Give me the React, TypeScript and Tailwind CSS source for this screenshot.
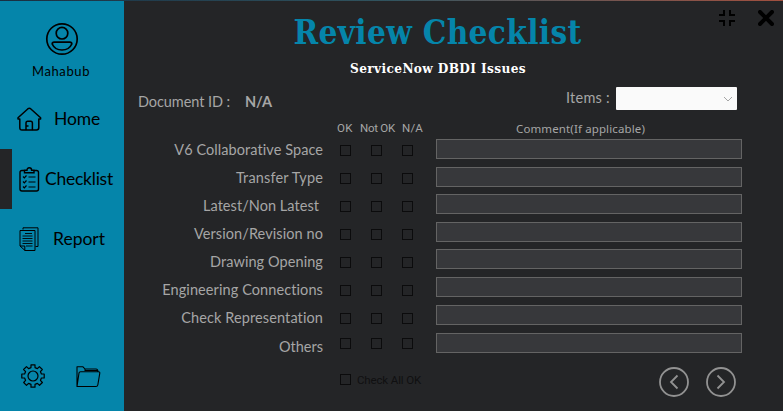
import { useLayoutEffect, useRef, useState } from "react";

type FitProps = { text: string; width: number; className?: string };

// One line of text, tracked so that it fills the given width.
function FitText({ text, width, className = "" }: FitProps) {
  const ref = useRef<HTMLSpanElement>(null);
  const [spacing, setSpacing] = useState(0);
  useLayoutEffect(() => {
    if (!ref.current) return;
    const natural = ref.current.getBoundingClientRect().width - spacing * text.length;
    setSpacing((width - natural) / text.length);
  }, [text, width]);
  return (
    <span ref={ref} className={`inline-block whitespace-pre ${className}`} style={{ letterSpacing: spacing }}>
      {text}
    </span>
  );
}

const rows = [
  { label: "V6 Collaborative Space", width: 149, input: "mb-2" },
  { label: "Transfer Type", width: 87, input: "mb-[7px]" },
  { label: "Latest/Non Latest", width: 116, input: "mb-2", pad: "pr-1" },
  { label: "Version/Revision no", width: 129, input: "mb-[7px]" },
  { label: "Drawing Opening", width: 113, input: "mb-2" },
  { label: "Engineering Connections", width: 161, input: "mb-2" },
  { label: "Check Representation", width: 142, input: "mb-2" },
  { label: "Others", width: 44, input: "", pad: "pt-px" },
];

function Box({ last = false }: { last?: boolean }) {
  return <button className={`block size-[11px] border border-[#0b0b0c] ${last ? "" : "mb-[17px]"}`} />;
}

function CheckColumn() {
  return (
    <div className="w-[31px]">
      {rows.slice(0, 6).map((r) => (
        <Box key={r.label} />
      ))}
      <button className="mb-[14px] block size-[11px] border border-[#0b0b0c]" />
      <Box last />
    </div>
  );
}

function Sidebar() {
  return (
    <aside className="flex w-[124px] shrink-0 flex-col bg-[#0585aa] text-black">
      <div className="flex h-[88px] flex-col items-center pt-[21px]">
        <svg width="34" height="34" viewBox="0 0 34 34" fill="none" stroke="black" strokeWidth="1.7" className="shrink-0">
          <circle cx="17" cy="17" r="15.2" />
          <circle cx="17" cy="11.2" r="5.8" />
          <path d="M7.2 22Q7.2 20.2 9.2 20.2H24.8Q26.8 20.2 26.8 22C25 26 21.5 28 17 28S9 26 7.2 22Z" />
        </svg>
        <FitText text="Mahabub" width={58} className="mr-[2px] mt-[7px] text-[13px] leading-4" />
      </div>
      <div className="flex h-[60px] items-center pl-[17px]">
        <svg width="25" height="25" viewBox="0 0 25 25" fill="none" stroke="black" strokeWidth="1.5" strokeLinejoin="round" strokeLinecap="round">
          <path d="M1 12V10.8L11 1.7Q12.3.8 13.6 1.7L23.6 10.8V12H21.8V20.5Q21.8 23 19.5 23H5Q2.8 23 2.8 20.5V12Z" />
          <path d="M9 22.5V16Q9 14.2 10.7 14.2H13.7Q15.4 14.2 15.4 16V22.5M9.2 19H11" />
        </svg>
        <FitText text="Home" width={46} className="ml-3 text-[17.5px]" />
      </div>
      <div className="flex h-[60px] items-center">
        <div className="h-full w-3 bg-[#242527]" />
        <svg className="ml-[7px]" width="21" height="25" viewBox="0 0 21 25" fill="none" stroke="black" strokeWidth="1.4">
          <path d="M6 3.5H3Q1 3.5 1 5.5V22Q1 24 3 24H17.5Q19.5 24 19.5 22V5.5Q19.5 3.5 17.5 3.5H14.5M5.5 5.8V3.2H8Q8 .8 10.3.8T12.6 3.2H15V5.8Z" />
          <path d="M4 9.5L5.3 10.8L7.5 8.5M4 14.5L5.3 15.8L7.5 13.5M4 19.5L5.3 20.8L7.5 18.5M9.5 10H16.5M9.5 15H16.5M9.5 20H16.5" strokeWidth="1.2" />
        </svg>
        <FitText text="Checklist" width={68} className="ml-[5px] text-[17.5px]" />
      </div>
      <div className="flex h-[60px] items-center pl-[19px]">
        <svg width="21" height="25" viewBox="0 0 21 25" fill="none" stroke="black" strokeWidth="1">
          <path d="M4 2.5V.8H19V19.5H16.5M1 3.5H16V23.5H6L1 19Z" />
          <path d="M1 19H5.8V23.5" />
          <path d="M6 6.5H13M3.5 9H13.5M3.5 11.5H13.5M3.5 14H13.5M3.5 16.5H13.5M7 19H13.5" strokeWidth=".9" />
        </svg>
        <FitText text="Report" width={52} className="ml-[13px] text-[17.5px]" />
      </div>
      <div className="mt-auto flex h-[47px] pl-[21px]">
        <svg width="24" height="24" viewBox="0 0 24 24" fill="none" stroke="black" strokeWidth="1.2" strokeLinejoin="round">
          <path d="M10 .8H14V3.6L16.4 4.6L18.4 2.6L21.3 5.5L19.4 7.6L20.4 10H23.2V14H20.4L19.4 16.4L21.4 18.5L18.5 21.3L16.4 19.4L14 20.4V23.2H10V20.4L7.6 19.4L5.5 21.3L2.7 18.5L4.6 16.4L3.6 14H.8V10H3.6L4.6 7.6L2.6 5.5L5.5 2.6L7.6 4.6L10 3.6Z" />
          <circle cx="12" cy="12" r="5" />
        </svg>
        <svg className="ml-[31px] mt-[2px]" width="25" height="22" viewBox="0 0 25 22" fill="none" stroke="black" strokeWidth="1.1" strokeLinejoin="round">
          <path d="M1 20.5V.8H7L9 3H20Q22 3 22 6M1 20.5L3 7Q3.3 5.8 4.5 5.8H22.5Q24 5.8 23.8 7.2L21.8 19Q21.5 20.5 20 20.5ZM9 3V4.5H21.5" />
        </svg>
      </div>
    </aside>
  );
}

export default function App() {
  return (
    <div className="flex h-[411px] w-[783px] flex-col overflow-hidden bg-[#242527] font-['Lato','Liberation_Sans',sans-serif]">
      <div className="h-px shrink-0 bg-linear-to-r from-[#182f42] via-[#31545f] to-[#a14f3e]" />
      <div className="flex min-h-0 flex-1">
        <Sidebar />
        <main className="min-w-0 flex-1 text-[#a6a6a6]">
          <header className="flex h-[84px] justify-between">
            <div className="ml-[169px] flex w-[289px] flex-col items-center font-['DejaVu_Serif_Condensed','DejaVu_Serif',serif] font-bold">
              <h1 className="h-[55px] pt-[10px] text-[33px] leading-[44px] text-[#0585aa]">
                <FitText text="Review Checklist" width={288} />
              </h1>
              <h2 className="pl-px text-[13.5px] leading-[24px] text-white">
                <FitText text="ServiceNow DBDI Issues" width={176} />
              </h2>
            </div>
            <div className="flex pr-[9px] pt-[9px]">
              <svg width="16" height="16" viewBox="0 0 16 16" fill="none" stroke="black" strokeWidth="2" className="mr-[23px]">
                <path d="M0 5H5V0M11 0V5H16M0 11H5V16M11 16V11H16" />
              </svg>
              <svg width="16" height="16" viewBox="0 0 16 16" stroke="black" strokeWidth="4" strokeLinecap="round">
                <path d="M2 2L14 14M14 2L2 14" />
              </svg>
            </div>
          </header>
          <div className="flex h-[34px] pl-[14px]">
            <div className="w-[107px] pt-[6px] leading-5">
              <FitText text="Document ID :" width={92} className="text-[14.5px]" />
            </div>
            <div className="w-[321px] pt-[6px] leading-5">
              <FitText text="N/A" width={27} className="text-[14.5px] font-bold" />
            </div>
            <div className="w-[50px] pt-[2px] leading-5">
              <FitText text="Items :" width={44} className="text-[14.5px]" />
            </div>
            <button className="mt-[2px] flex h-[23px] w-[121px] items-center justify-end rounded-[1px] bg-[#fafafa] pr-1">
              <svg width="10" height="6" viewBox="0 0 10 6" fill="none" stroke="#a5a5a5">
                <path d="M1 1L5 5L9 1" />
              </svg>
            </button>
          </div>
          <div className="flex h-[20px] font-['Roboto',sans-serif] text-[11.5px]">
            <div className="flex w-[392px] pl-[213px] leading-[18px]">
              <div className="w-[23px]"><FitText text="OK" width={16} /></div>
              <div className="w-[42px]"><FitText text="Not OK" width={35} /></div>
              <FitText text="N/A" width={21} />
            </div>
            <FitText text="Comment(If applicable)" width={129} className="font-['Noto_Sans',sans-serif] text-[11.5px] leading-5" />
          </div>
          <div className="flex h-[219px]">
            <div className="flex w-[199px] flex-col items-end text-[14.5px]">
              {rows.map((r) => (
                <div key={r.label} className={`h-7 shrink-0 leading-[21px] ${r.pad ?? ""}`}>
                  <FitText text={r.label} width={r.width} />
                </div>
              ))}
            </div>
            <div className="ml-[17px] flex w-[96px] pt-[6px]">
              <CheckColumn />
              <CheckColumn />
              <CheckColumn />
            </div>
            <div className="flex w-[306px] flex-col">
              {rows.map((r) => (
                <input key={r.label} className={`block h-5 w-[306px] shrink-0 border border-[#646464] bg-[#37383b] ${r.input}`} />
              ))}
            </div>
          </div>
          <div className="flex pl-[216px] pt-[9px]">
            <button className="mt-[7px] size-[11px] border border-[#0b0b0c]" />
            <div className="w-[308px] pl-[6px] pt-[5px] font-['Roboto',sans-serif] text-[11.5px] leading-4 text-[#101011]">
              <FitText text="Check All OK" width={64} />
            </div>
            <div className="flex gap-[17px]">
              <svg width="30" height="30" viewBox="0 0 30 30" fill="none" stroke="#929292" strokeWidth="1.8">
                <circle cx="15" cy="15" r="14" /><path d="M18.5 8.5L12 15L18.5 21.5" />
              </svg>
              <svg width="30" height="30" viewBox="0 0 30 30" fill="none" stroke="#929292" strokeWidth="1.8">
                <circle cx="15" cy="15" r="14" /><path d="M11.5 8.5L18 15L11.5 21.5" />
              </svg>
            </div>
          </div>
        </main>
      </div>
    </div>
  );
}
